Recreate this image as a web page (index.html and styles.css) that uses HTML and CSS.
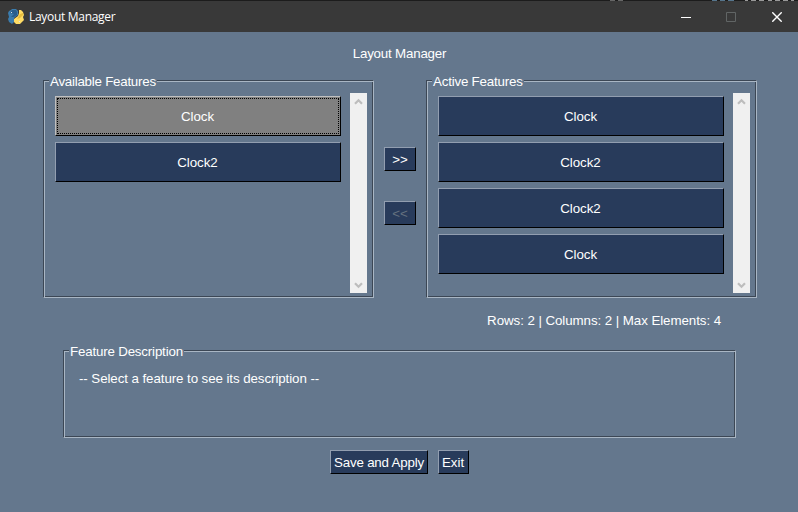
FILE: index.html
```html
<!DOCTYPE html>
<html lang="en">
<head>
<meta charset="utf-8">
<title>Layout Manager</title>
<link rel="stylesheet" href="styles.css">
</head>
<body>
<header class="titlebar">
  <svg class="logo" viewBox="0 0 16 16" width="16" height="16">
    <path fill="#3b7cad" d="M3 1l1-1h4l2 2v4L6 9v4l-2 2-3-2-1-3 1-2-1-4 1-2z"/>
    <path fill="#295e8c" d="M4 1h4l1 2v3L6 8H3l3-3-4-1z"/>
    <path fill="#ffdc65" d="M11 1h2l2 2 1 3-1 2 1 3-2 2-2 2H8l-2-2v-3l4-3 1-3z"/>
    <path fill="#e7bd3d" d="M12 5l3-1v2l-3 3-3 1 2-3z"/>
    <path fill="#d8e4eb" d="M3 3h1v1H3zM11 12h1v1h-1z"/>
  </svg>
  <span class="window-name">Layout Manager</span>
  <div class="controls">
    <svg viewBox="0 0 10 10" width="10" height="10"><path d="M0 5.5h10" stroke="#fff"/></svg>
    <svg viewBox="0 0 10 10" width="10" height="10"><path d="M.5.5h9v9h-9z" fill="none" stroke="#616565"/></svg>
    <svg class="close" viewBox="0 0 10 10" width="10" height="10"><path d="M.3.3l9.4 9.4M9.7.3L.3 9.7" stroke="#fff" stroke-width="1.4"/></svg>
  </div>
</header>
<main class="content">
  <h1 class="heading">Layout Manager</h1>
  <div class="columns">
    <section class="frame list-frame">
      <h2 class="legend t-available">Available Features</h2>
      <div class="list">
        <button class="btn feature selected">Clock</button>
        <button class="btn feature">Clock2</button>
      </div>
      <div class="scrollbar">
        <svg viewBox="0 0 9 7" width="9" height="7"><path d="M1 5.7l3.5-3.5L8 5.7" fill="none" stroke="#bdbdbd" stroke-width="2.2"/></svg>
        <svg viewBox="0 0 9 7" width="9" height="7"><path d="M1 1.3l3.5 3.5L8 1.3" fill="none" stroke="#bdbdbd" stroke-width="2.2"/></svg>
      </div>
    </section>
    <div class="transfer">
      <button class="btn move">&gt;&gt;</button>
      <button class="btn move off">&lt;&lt;</button>
    </div>
    <section class="frame list-frame">
      <h2 class="legend t-active">Active Features</h2>
      <div class="list">
        <button class="btn feature">Clock</button>
        <button class="btn feature">Clock2</button>
        <button class="btn feature">Clock2</button>
        <button class="btn feature">Clock</button>
      </div>
      <div class="scrollbar">
        <svg viewBox="0 0 9 7" width="9" height="7"><path d="M1 5.7l3.5-3.5L8 5.7" fill="none" stroke="#bdbdbd" stroke-width="2.2"/></svg>
        <svg viewBox="0 0 9 7" width="9" height="7"><path d="M1 1.3l3.5 3.5L8 1.3" fill="none" stroke="#bdbdbd" stroke-width="2.2"/></svg>
      </div>
    </section>
  </div>
  <p class="summary">Rows: 2 | Columns: 2 | Max Elements: 4</p>
  <section class="frame description">
    <h2 class="legend t-description">Feature Description</h2>
    <p class="hint">-- Select a feature to see its description --</p>
  </section>
  <div class="actions">
    <button class="btn save">Save and Apply</button>
    <button class="btn exit">Exit</button>
  </div>
</main>
</body>
</html>
```
FILE: styles.css
```css
* { box-sizing: border-box; }

body {
  margin: 0;
  width: 798px;
  height: 512px;
  overflow: hidden;
  background: #64778d;
  color: #fff;
  font: 13.33px/16px "Liberation Sans", Arial, sans-serif;
}

h1, h2, p { margin: 0; font: inherit; white-space: nowrap; }

.titlebar {
  position: relative;
  display: flex;
  align-items: center;
  height: 32px;
  padding: 0 16px 0 8px;
  border-top: 1px solid #1c1c1c;
  background: #393939;
}

/* Slivers of the window behind, visible along the top edge */
.titlebar::before {
  content: "";
  position: absolute;
  top: -1px;
  right: 0;
  width: 188px;
  height: 1px;
  background: linear-gradient(90deg,
    #666 0 5px, #1c1c1c 5px 8px, #666 8px 13px, #1c1c1c 13px 102px,
    #56758c 102px 107px, #1c1c1c 107px 110px, #56758c 110px 115px,
    #1c1c1c 115px 118px, #56758c 118px 124px, #1c1c1c 124px 135px,
    #999 135px 138px, #1c1c1c 138px 141px, #999 141px 146px,
    #1c1c1c 146px 149px, #999 149px 154px, #1c1c1c 154px 158px,
    #999 158px 162px, #1c1c1c 162px 165px, #999 165px 170px,
    #1c1c1c 170px 173px, #999 173px 178px, #1c1c1c 178px 181px,
    #999 181px 184px, #1c1c1c 184px);
}

.logo { margin-right: 5px; }

.window-name {
  font: 12px/16px "Open Sans", "Noto Sans", sans-serif;
  letter-spacing: -0.3px;
}

.controls { display: flex; gap: 35px; margin-left: auto; }
.controls svg { display: block; }
.controls .close { margin-left: 1px; }

.heading {
  height: 48px;
  padding: 14px 0 0 1px;
  text-align: center;
  letter-spacing: -0.2px;
}

.columns { display: flex; padding-left: 43px; }

.frame {
  position: relative;
  border: 1px solid;
  border-color: #3c4755 #a9b6c4 #a9b6c4 #3c4755;
  box-shadow: inset 1px 1px #a9b6c4, inset -1px -1px #3c4755;
}

.legend {
  position: absolute;
  top: -7px;
  left: 5px;
  padding: 0 1px;
  background: #64778d;
}

.t-available { letter-spacing: -0.24px; }
.t-active { letter-spacing: -0.2px; }
.t-description { letter-spacing: -0.18px; }

.list-frame {
  display: flex;
  justify-content: space-between;
  width: 331px;
  height: 218px;
  padding: 12px 6px 0 11px;
}

.list {
  display: flex;
  flex-direction: column;
  gap: 6px;
  width: 286px;
  padding-top: 3px;
}

.btn {
  display: flex;
  align-items: center;
  justify-content: center;
  padding: 2px 0 0;
  border: 1px solid;
  border-color: #929eb0 #000 #000 #929eb0;
  border-radius: 0;
  background: #283b5b;
  color: #fff;
  font: inherit;
  white-space: nowrap;
}

.feature { height: 40px; padding-right: 1px; letter-spacing: -0.05px; }

.selected {
  border-color: #c0c0c0 #000 #000 #c0c0c0;
  background: #808080;
  outline: 1px dotted #000;
  outline-offset: -3px;
}

.scrollbar {
  display: flex;
  flex-direction: column;
  align-items: center;
  justify-content: space-between;
  width: 17px;
  height: 200px;
  padding: 5px 0 4px;
  background: #f0f0f0;
}

.transfer {
  display: flex;
  flex-direction: column;
  gap: 30px;
  width: 52px;
  padding: 67px 10px 0;
}

.move { height: 24px; }
.off { color: #64717f; }

.summary {
  height: 52px;
  padding: 15px 77px 0 0;
  text-align: right;
  letter-spacing: -0.07px;
}

.description {
  width: 673px;
  height: 88px;
  margin-left: 63px;
  padding: 20px 0 0 15px;
}

.hint { letter-spacing: -0.08px; }

.actions { display: flex; gap: 10px; padding: 12px 0 0 330px; }
.save { width: 98px; height: 24px; letter-spacing: -0.2px; }
.exit { width: 31px; height: 24px; padding-right: 1px; }
```
